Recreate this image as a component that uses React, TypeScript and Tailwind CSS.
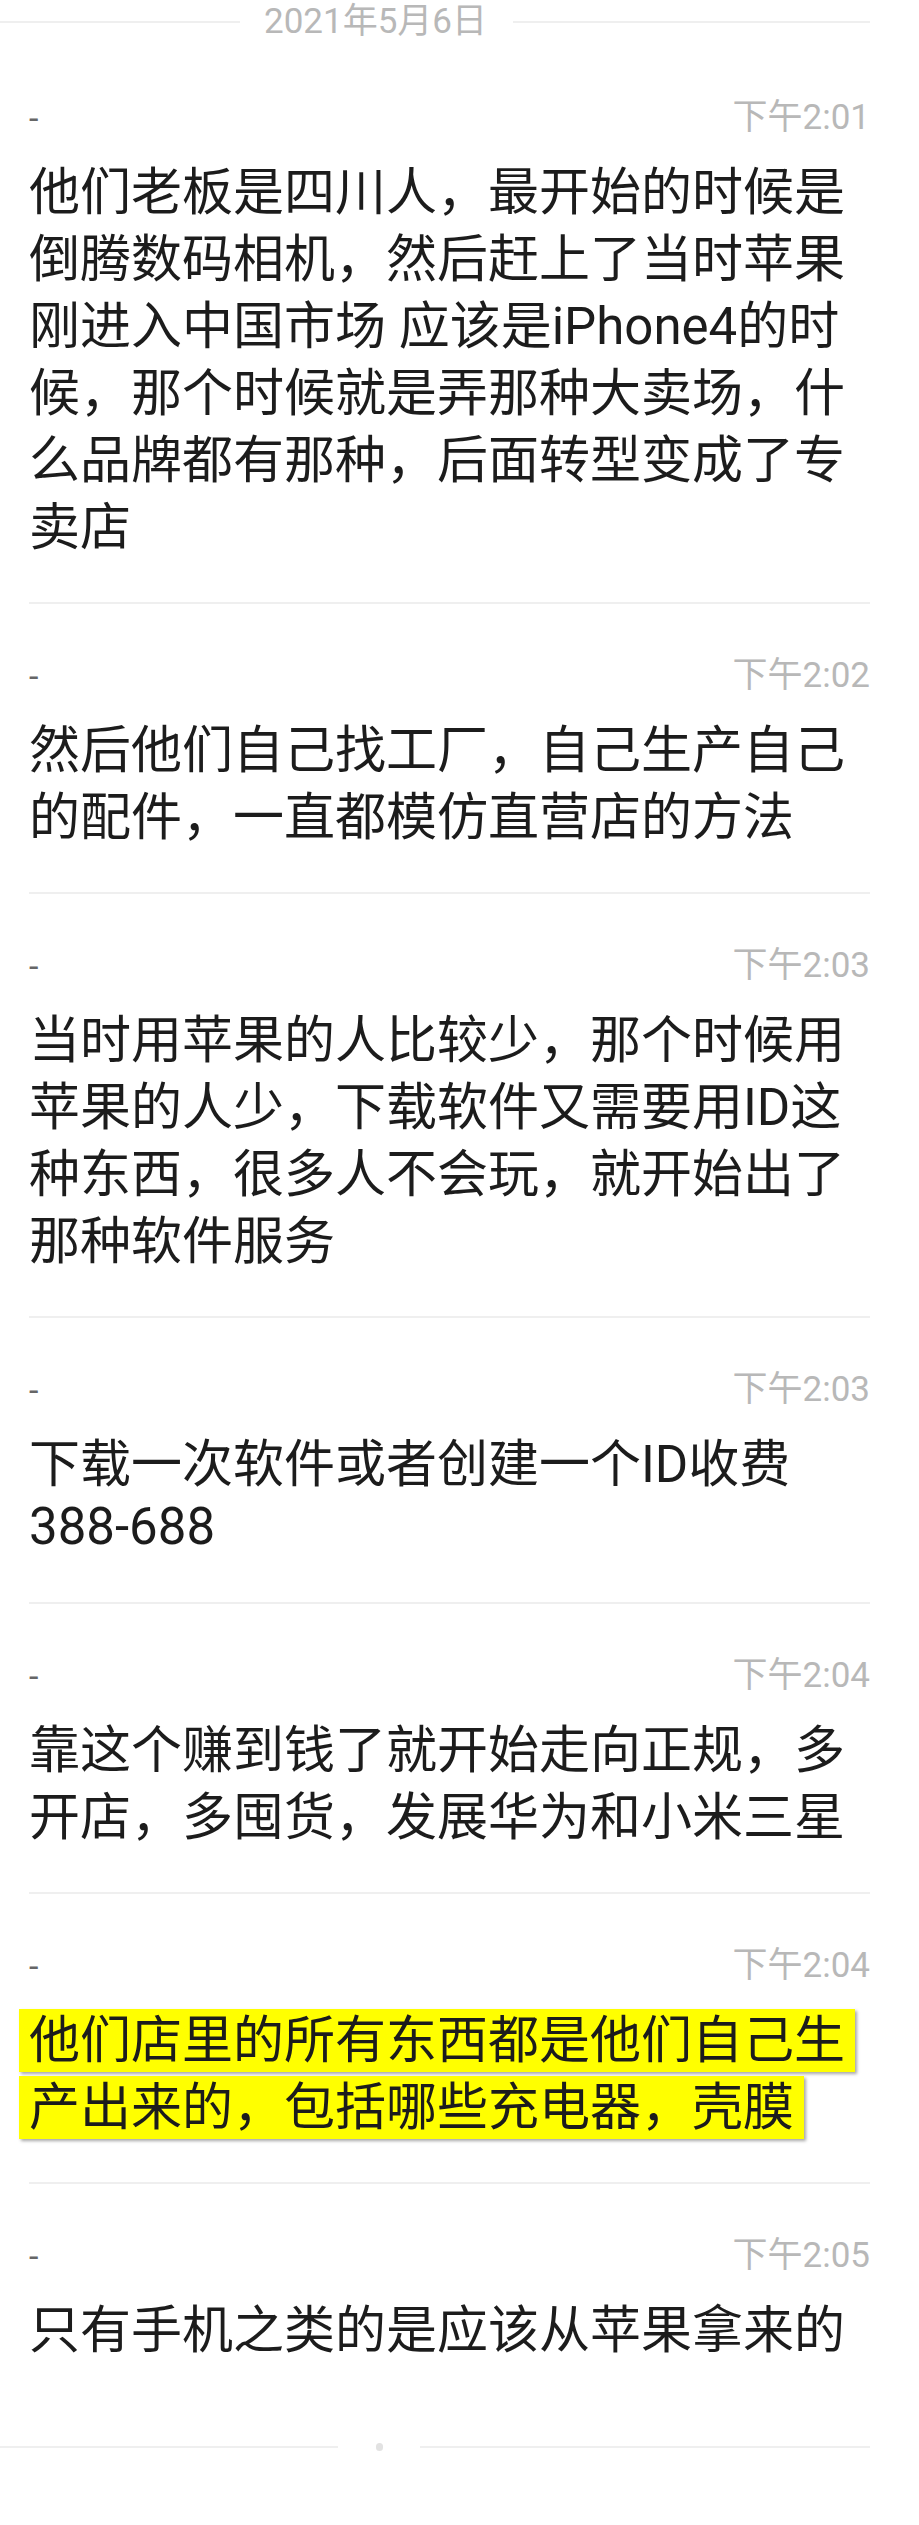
import React from "react";

type Note = {
  time: string;
  lines?: string[];
  text?: string;
  highlight?: boolean;
};

const notes: Note[] = [
  {
    time: "下午2:01",
    text: "他们老板是四川人，最开始的时候是倒腾数码相机，然后赶上了当时苹果刚进入中国市场 应该是iPhone4的时候，那个时候就是弄那种大卖场，什么品牌都有那种，后面转型变成了专卖店",
  },
  { time: "下午2:02", text: "然后他们自己找工厂，自己生产自己的配件，一直都模仿直营店的方法" },
  {
    time: "下午2:03",
    text: "当时用苹果的人比较少，那个时候用苹果的人少，下载软件又需要用ID这种东西，很多人不会玩，就开始出了那种软件服务",
  },
  { time: "下午2:03", lines: ["下载一次软件或者创建一个ID收费", "388-688"] },
  { time: "下午2:04", text: "靠这个赚到钱了就开始走向正规，多开店，多囤货，发展华为和小米三星" },
  {
    time: "下午2:04",
    lines: ["他们店里的所有东西都是他们自己生", "产出来的，包括哪些充电器，壳膜"],
    highlight: true,
  },
  { time: "下午2:05", text: "只有手机之类的是应该从苹果拿来的" },
];

const font = "font-['Roboto','Noto_Sans_CJK_SC',sans-serif]";

function TimeRow({ time }: { time: string }) {
  return (
    <div className="h-[40px] flex items-center justify-between">
      <span className="text-[34px] leading-[40px] text-[#666]">-</span>
      <span className="text-[35px] leading-[40px] text-[#b8b8b8]">{time}</span>
    </div>
  );
}

function NoteBody({ note }: { note: Note }) {
  if (note.highlight && note.lines) {
    return (
      <div className="mt-[21px] flex flex-col items-start">
        {note.lines.map((l) => (
          <div key={l} className="h-[67px] py-[2px] -ml-[10px]">
            <span className="block h-[63px] leading-[63px] px-[10px] bg-[#ffff00] text-[51px] text-[#1c1c1c] shadow-[2px_2px_3px_rgba(0,0,0,0.35)] whitespace-nowrap">
              {l}
            </span>
          </div>
        ))}
      </div>
    );
  }
  if (note.lines) {
    return (
      <div className="mt-[21px] text-[51px] text-[#1c1c1c]">
        <div className="leading-[67px]">{note.lines[0]}</div>
        <div className="leading-[58px]">{note.lines[1]}</div>
      </div>
    );
  }
  return <p className="mt-[21px] text-[51px] leading-[67px] text-[#1c1c1c]">{note.text}</p>;
}

export default function App() {
  return (
    <div className={`min-h-[2525px] w-full bg-white ${font}`}>
      <div className="w-[870px]">
        {/* date header */}
        <div className="h-[44px] flex items-center">
          <div className="w-[240px] h-[2px] bg-[#efefef]" />
          <span className="ml-[24px] text-[35px] leading-[44px] text-[#b8b8b8]">2021年5月6日</span>
          <div className="ml-[26px] flex-1 h-[2px] bg-[#efefef]" />
        </div>

        <div className="ml-[29px]">
          {notes.map((note, i) => {
            const first = i === 0;
            const last = i === notes.length - 1;
            const pb = last ? "pb-[61px]" : note.lines && !note.highlight ? "pb-[46px]" : "pb-[41px]";
            return (
              <div
                key={i}
                className={`${first ? "pt-[54px]" : "pt-[52px] border-t-2 border-[#efefef]"} ${pb}`}
              >
                <TimeRow time={note.time} />
                <NoteBody note={note} />
              </div>
            );
          })}
        </div>

        {/* end marker */}
        <div className="h-[44px] flex items-center">
          <div className="w-[338px] h-[2px] bg-[#efefef]" />
          <div className="ml-[38px] w-[7px] h-[8px] rounded-full bg-[#e2e2e2]" />
          <div className="ml-[37px] flex-1 h-[2px] bg-[#efefef]" />
        </div>
      </div>
    </div>
  );
}
